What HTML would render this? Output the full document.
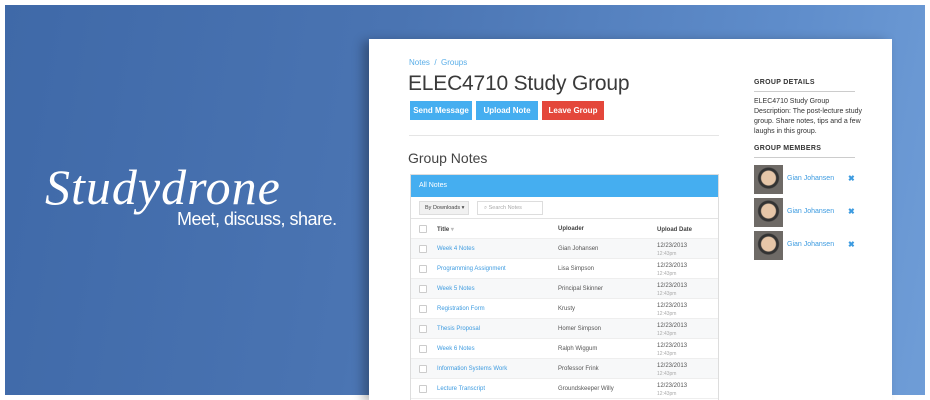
<!DOCTYPE html>
<html><head><style>
*{margin:0;padding:0;box-sizing:border-box}
html,body{width:930px;height:400px;overflow:hidden}
body{background:#fff;position:relative;font-family:"Liberation Sans",sans-serif}
.bg{position:absolute;left:5px;top:5px;width:920px;height:390px;background:linear-gradient(100deg,#3f69a8 0%,#4a74b2 40%,#5f8dcb 80%,#6f9dd7 100%)}
.logo{position:absolute;left:45px;top:158px;color:#fff;font-family:"Liberation Serif",serif;font-style:italic;font-size:50px;letter-spacing:1px}
.tag{position:absolute;left:177px;top:209px;color:#fff;font-size:18px;letter-spacing:-0.5px}
.card{position:absolute;left:369px;top:39px;width:523px;height:361px;background:#fff;box-shadow:-6px 2px 10px rgba(0,0,0,.3)}
.a{position:absolute}
.crumb{left:40px;top:19px;font-size:8px;color:#5aaee8}
h1{position:absolute;left:39px;top:33px;font-size:21px;font-weight:normal;color:#3a3a3a;letter-spacing:-0.2px}
.btn{position:absolute;top:62px;height:19px;width:62px;color:#fff;font-size:8px;font-weight:bold;text-align:center;line-height:19px}
.hr{position:absolute;left:40px;top:96px;width:310px;height:1px;background:#e5e5e5}
h2{position:absolute;left:39px;top:111px;font-size:14px;font-weight:normal;color:#444}
.tbl{position:absolute;left:41px;top:135px;width:309px;height:240px;border:1px solid #ddd}
.th{height:22px;background:#45aef0;color:#fff;font-size:7px;line-height:22px;padding-left:8px}
.tool{height:22px;border-bottom:1px solid #e3e3e3;position:relative}
.row{height:20px;border-bottom:1px solid #eee;position:relative;font-size:6px;color:#555}
.row:nth-child(even){background:#f7f8f9}
.cb{position:absolute;left:8px;top:6px;width:8px;height:8px;border:1px solid #ccc;background:#fff;border-radius:1px}
.t{position:absolute;left:26px;top:7px;color:#3d9be0}
.u{position:absolute;left:147px;top:7px}
.d{position:absolute;left:246px;top:3px;line-height:8px}
.d i{font-style:normal;color:#aaa;font-size:5px;display:block}
.side{font-size:7px;color:#333}
.sh{position:absolute;left:385px;font-size:7px;font-weight:bold;color:#333;letter-spacing:.3px}
.sl{position:absolute;left:385px;width:101px;height:1px;background:#ccc}
.av{position:absolute;left:385px;width:29px;height:29px;background:radial-gradient(circle at 50% 45%,#e6c6a8 0 7px,#333 8px 10px,#6e6a66 11px)}
.mn{position:absolute;left:418px;font-size:7px;color:#3d9be0}
.x{position:absolute;left:479px;font-size:8px;color:#3d9be0;font-weight:bold}
</style></head><body>
<div class="bg"></div>
<div class="logo">Studydrone</div>
<div class="tag">Meet, discuss, share.</div>
<div class="card">
<div class="a crumb">Notes &nbsp;/&nbsp; Groups</div>
<h1>ELEC4710 Study Group</h1>
<div class="btn" style="left:41px;background:#45aef0">Send Message</div>
<div class="btn" style="left:107px;background:#45aef0">Upload Note</div>
<div class="btn" style="left:173px;background:#e4473b">Leave Group</div>
<div class="hr"></div>
<h2>Group Notes</h2>
<div class="tbl">
<div class="th">All Notes</div>
<div class="tool">
<div class="a" style="left:8px;top:4px;width:50px;height:14px;background:#f1f1f1;border:1px solid #ddd;font-size:5.5px;line-height:12px;padding-left:5px;color:#444">By Downloads ▾</div>
<div class="a" style="left:66px;top:4px;width:66px;height:14px;border:1px solid #ddd;font-size:5.5px;line-height:12px;padding-left:6px;color:#aaa">⌕ Search Notes</div>
</div>
<div class="row" style="background:#fff;font-weight:bold;color:#444"><div class="cb"></div><div class="t" style="color:#444">Title <span style="color:#bbb">▾</span></div><div class="u">Uploader</div><div class="d" style="top:7px">Upload Date</div></div>
<div class="row"><div class="cb"></div><div class="t">Week 4 Notes</div><div class="u">Gian Johansen</div><div class="d">12/23/2013<i>12:43pm</i></div></div>
<div class="row"><div class="cb"></div><div class="t">Programming Assignment</div><div class="u">Lisa Simpson</div><div class="d">12/23/2013<i>12:43pm</i></div></div>
<div class="row"><div class="cb"></div><div class="t">Week 5 Notes</div><div class="u">Principal Skinner</div><div class="d">12/23/2013<i>12:43pm</i></div></div>
<div class="row"><div class="cb"></div><div class="t">Registration Form</div><div class="u">Krusty</div><div class="d">12/23/2013<i>12:43pm</i></div></div>
<div class="row"><div class="cb"></div><div class="t">Thesis Proposal</div><div class="u">Homer Simpson</div><div class="d">12/23/2013<i>12:43pm</i></div></div>
<div class="row"><div class="cb"></div><div class="t">Week 6 Notes</div><div class="u">Ralph Wiggum</div><div class="d">12/23/2013<i>12:43pm</i></div></div>
<div class="row"><div class="cb"></div><div class="t">Information Systems Work</div><div class="u">Professor Frink</div><div class="d">12/23/2013<i>12:43pm</i></div></div>
<div class="row"><div class="cb"></div><div class="t">Lecture Transcript</div><div class="u">Groundskeeper Willy</div><div class="d">12/23/2013<i>12:43pm</i></div></div>
</div>
<div class="sh" style="top:40px">GROUP DETAILS</div>
<div class="sl" style="top:52px"></div>
<div class="a side" style="left:385px;top:58px;width:112px;line-height:10px">ELEC4710 Study Group<br>Description: The post-lecture study group. Share notes, tips and a few laughs in this group.</div>
<div class="sh" style="top:106px">GROUP MEMBERS</div>
<div class="sl" style="top:118px"></div>
<div class="av" style="top:126px"></div><div class="mn" style="top:136px">Gian Johansen</div><div class="x" style="top:135px">✖</div>
<div class="av" style="top:159px"></div><div class="mn" style="top:169px">Gian Johansen</div><div class="x" style="top:168px">✖</div>
<div class="av" style="top:192px"></div><div class="mn" style="top:202px">Gian Johansen</div><div class="x" style="top:201px">✖</div>
</div>
</body></html>
